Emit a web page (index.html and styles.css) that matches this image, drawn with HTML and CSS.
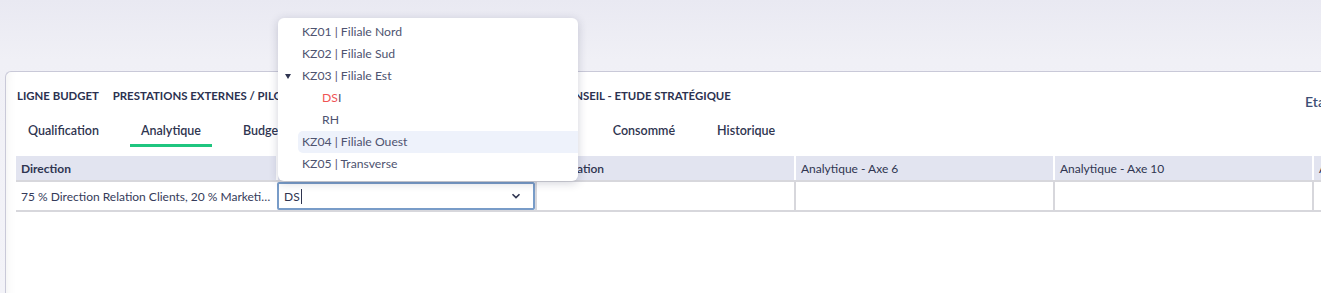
FILE: index.html
```html
<!DOCTYPE html>
<html lang="fr">

<head>
    <meta charset="UTF-8">
    <title>Ligne budget - Analytique</title>
    <link rel="stylesheet" href="styles.css">
</head>

<body>

    <div class="topbar"></div>

    <div class="card">
        <div class="card-head">
            <div class="card-title">
                <span class="label">LIGNE BUDGET</span>
                <span class="value">PRESTATIONS EXTERNES / PILOTAGE ET GOUVERNANCE DES PROJETS DIGITAUX - CONSEIL - ETUDE STRATÉGIQUE</span>
            </div>
            <div class="status">Etat : Brouillon</div>
        </div>

        <ul class="tabs">
            <li>Qualification</li>
            <li class="active">Analytique</li>
            <li>Budget</li>
            <li>Engagements</li>
            <li>Réalisations mensuelles</li>
            <li>Consommé</li>
            <li>Historique</li>
        </ul>

        <table class="grid">
            <colgroup>
                <col class="first">
                <col><col><col><col><col>
            </colgroup>
            <thead>
                <tr>
                    <th class="strong">Direction</th>
                    <th>Filiale</th>
                    <th class="medium">Destination</th>
                    <th>Analytique - Axe 6</th>
                    <th>Analytique - Axe 10</th>
                    <th>Analytique - Axe 11</th>
                </tr>
            </thead>
            <tbody>
                <tr>
                    <td class="ellipsis">75 % Direction Relation Clients, 20 % Marketing, 5 % DSI</td>
                    <td class="editing">
                        <div class="combo">
                            <span class="typed">DS</span><span class="caret-line"></span>
                            <svg class="chevron" width="10" height="6" viewBox="0 0 10 6">
                                <path d="M1.5 1.2 L5 4.6 L8.5 1.2" fill="none" stroke="#2f3550" stroke-width="1.6"/>
                            </svg>
                        </div>
                    </td>
                    <td></td>
                    <td></td>
                    <td></td>
                    <td></td>
                </tr>
            </tbody>
        </table>
    </div>

    <!-- dropdown of the filiale combo -->
    <ul class="dropdown">
        <li>KZ01 | Filiale Nord</li>
        <li>KZ02 | Filiale Sud</li>
        <li class="open"><span class="tri"></span>KZ03 | Filiale Est</li>
        <li class="child"><span class="match">DS</span>I</li>
        <li class="child">RH</li>
        <li class="hover">KZ04 | Filiale Ouest</li>
        <li>KZ05 | Transverse</li>
    </ul>

</body>

</html>
```
FILE: styles.css
```css
body {
    margin: 0;
    font-family: Lato, "Noto Sans", sans-serif;
    font-size: 12px;
    color: #2f3550;
    background: linear-gradient(#e9e9f2, #f0f0f6 60px, #f3f3f8);
    height: 293px;
    overflow: hidden;
}

.topbar {
    height: 71px;
}

.card {
    margin-left: 5px;
    width: 1400px;
    height: 260px;
    background: #fff;
    border: 1px solid #c9c9d8;
    border-right: none;
    border-radius: 6px 0 0 0;
    box-shadow: inset 12px 0 10px -10px rgba(0, 0, 0, 0.05);
    padding: 16px 0 0 10px;
    box-sizing: border-box;
}

.card-head {
    display: flex;
    align-items: flex-start;
    padding-left: 1px;
}

.card-title {
    font-weight: 700;
    font-size: 11.4px;
    color: #2b3150;
    line-height: 16px;
    width: 1288px;
    white-space: nowrap;
}

.card-title .label {
    margin-right: 11px;
}

.status {
    font-size: 14px;
    font-weight: 600;
    color: #3c4e75;
    margin-top: 5px;
    white-space: nowrap;
}

/* tabs */
.tabs {
    list-style: none;
    margin: 9px 0 0 1px;
    padding: 0;
    display: flex;
    gap: 20px;
}

.tabs li {
    padding: 4px 11px 6px;
    font-weight: 600;
    font-size: 12.5px;
    color: #2f3550;
    border-bottom: 3px solid transparent;
    white-space: nowrap;
}

.tabs li.active {
    border-bottom-color: #1fc57f;
}

/* grid */
.grid {
    margin-top: 9px;
    border-collapse: collapse;
    table-layout: fixed;
    width: 1556px;
}

.grid col {
    width: 259px;
}

.grid col.first {
    width: 261px;
}

.grid th {
    background: #e2e4f0;
    text-align: left;
    font-weight: 400;
    font-size: 12px;
    color: #2f3550;
    height: 25px;
    padding: 0 5px;
    border-left: 2px solid #fff;
    border-bottom: 2px solid #d7d7dc;
    box-sizing: border-box;
    white-space: nowrap;
    overflow: hidden;
}

.grid th:first-child {
    border-left: none;
}

.grid th.strong {
    font-weight: 700;
}

.grid th.medium {
    font-weight: 600;
}

.grid td {
    height: 28px;
    padding: 0 5px;
    border-left: 2px solid #d7d7dc;
    border-bottom: 2px solid #d7d7dc;
    font-size: 12px;
    color: #353b5a;
    box-sizing: border-box;
}

.grid td:first-child {
    border-left: none;
}

.ellipsis {
    white-space: nowrap;
    overflow: hidden;
    text-overflow: ellipsis;
}

.grid td.editing {
    padding: 0;
    border-left: none;
}

.combo {
    height: 28px;
    box-sizing: border-box;
    border: 2px solid #789cc8;
    border-radius: 2px;
    display: flex;
    align-items: center;
    padding: 0 12px 0 5px;
    background: #fff;
}

.typed {
    color: #2f3550;
}

.caret-line {
    width: 1px;
    height: 15px;
    background: #2f3550;
    margin-left: 1px;
}

.chevron {
    margin-left: auto;
}

/* dropdown */
.dropdown {
    position: absolute;
    left: 278px;
    top: 18px;
    width: 300px;
    margin: 0;
    padding: 3px 0 6px;
    list-style: none;
    background: #fff;
    border-radius: 6px;
    box-shadow: 0 2px 10px rgba(40, 45, 80, 0.22);
    font-size: 12.2px;
    color: #4e5370;
}

.dropdown li {
    height: 22px;
    line-height: 22px;
    padding-left: 24px;
    position: relative;
}

.dropdown li.child {
    padding-left: 44px;
}

.dropdown li.hover {
    background: #eef2fb;
    margin-left: 20px;
    padding-left: 4px;
    border-radius: 5px 0 0 5px;
}

.dropdown .match {
    color: #f05454;
}

.tri {
    position: absolute;
    left: 7px;
    top: 9px;
    border-left: 3.5px solid transparent;
    border-right: 3.5px solid transparent;
    border-top: 5px solid #2f3550;
}
```
